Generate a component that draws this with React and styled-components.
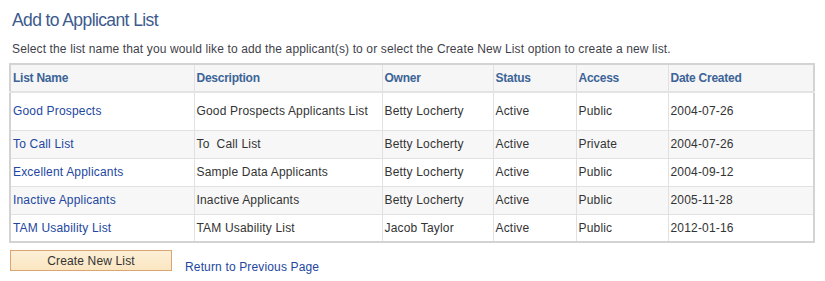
import React from "react";
import styled, { createGlobalStyle } from "styled-components";

const GlobalStyle = createGlobalStyle`
  body {
    margin: 0;
    background: #ffffff;
    font-family: "Liberation Sans", Arial, sans-serif;
  }
`;

const Page = styled.div`
  width: 825px;
  height: 281px;
  padding: 8px 0 0 9px;
  box-sizing: border-box;
`;

const Title = styled.h1`
  margin: 0 0 0 3px;
  height: 24px;
  line-height: 24px;
  font-size: 17.5px;
  letter-spacing: -0.6px;
  font-weight: normal;
  color: #3d5a8d;
`;

const Intro = styled.p`
  margin: 9px 0 0 3px;
  height: 16px;
  line-height: 16px;
  font-size: 12px;
  letter-spacing: 0.13px;
  color: #3f3f4a;
`;

const Table = styled.table`
  margin-top: 6px;
  width: 804px;
  table-layout: fixed;
  border-collapse: collapse;
  border: 2px solid #d3d3d3;
  font-size: 12px;
`;

const HeadCell = styled.th`
  height: 26px;
  padding: 0 2px;
  text-align: left;
  font-weight: bold;
  letter-spacing: -0.25px;
  color: #3c6496;
  background: #f6f6f6;
  border-left: 1px solid #e1e1e1;
  border-bottom: 2px solid #e3e3e3;
  white-space: nowrap;
`;

const Row = styled.tr`
  background: ${(p) => (p.$shaded ? "#f7f7f7" : "#ffffff")};
  height: ${(p) => p.$h}px;
`;

const Cell = styled.td`
  padding: 0 2px;
  color: #333333;
  letter-spacing: 0.18px;
  border-left: 1px solid #e1e1e1;
  border-top: 1px solid #e1e1e1;
  white-space: nowrap;
`;

const LinkText = styled.a`
  color: #2347a0;
  text-decoration: none;
  cursor: pointer;
`;

const Footer = styled.div`
  display: flex;
  align-items: flex-start;
  margin-top: 7px;
  margin-left: 1px;
`;

const Button = styled.button`
  width: 162px;
  height: 21px;
  padding: 0;
  font-family: "Liberation Sans", Arial, sans-serif;
  font-size: 12px;
  letter-spacing: 0.15px;
  color: #333333;
  background: linear-gradient(#fcefd6, #fbe6c2);
  border: 1px solid #dca672;
  cursor: pointer;
`;

const ReturnLink = styled.a`
  margin: 10px 0 0 13px;
  font-size: 12px;
  letter-spacing: 0.15px;
  line-height: 14px;
  color: #2347a0;
  cursor: pointer;
`;

const columns = [
  { name: "List Name", w: 184 },
  { name: "Description", w: 188 },
  { name: "Owner", w: 111 },
  { name: "Status", w: 83 },
  { name: "Access", w: 92 },
  { name: "Date Created", w: 146 },
];

const rows = [
  ["Good Prospects", "Good Prospects Applicants List", "Betty Locherty", "Active", "Public", "2004-07-26"],
  ["To Call List", "To\u00a0 Call List", "Betty Locherty", "Active", "Private", "2004-07-26"],
  ["Excellent Applicants", "Sample Data Applicants", "Betty Locherty", "Active", "Public", "2004-09-12"],
  ["Inactive Applicants", "Inactive Applicants", "Betty Locherty", "Active", "Public", "2005-11-28"],
  ["TAM Usability List", "TAM Usability List", "Jacob Taylor", "Active", "Public", "2012-01-16"],
];

export default function App() {
  return (
    <Page>
      <GlobalStyle />
      <Title>Add to Applicant List</Title>
      <Intro>
        Select the list name that you would like to add the applicant(s) to or select the Create
        New List option to create a new list.
      </Intro>
      <Table>
        <colgroup>
          {columns.map((c) => (
            <col key={c.name} style={{ width: c.w }} />
          ))}
        </colgroup>
        <thead>
          <tr>
            {columns.map((c) => (
              <HeadCell key={c.name}>{c.name}</HeadCell>
            ))}
          </tr>
        </thead>
        <tbody>
          {rows.map((r, i) => (
            <Row key={r[0]} $shaded={i % 2 === 1} $h={i === 0 ? 38 : 28}>
              {r.map((v, j) => (
                <Cell key={j}>{j === 0 ? <LinkText>{v}</LinkText> : v}</Cell>
              ))}
            </Row>
          ))}
        </tbody>
      </Table>
      <Footer>
        <Button>Create New List</Button>
        <ReturnLink>Return to Previous Page</ReturnLink>
      </Footer>
    </Page>
  );
}
